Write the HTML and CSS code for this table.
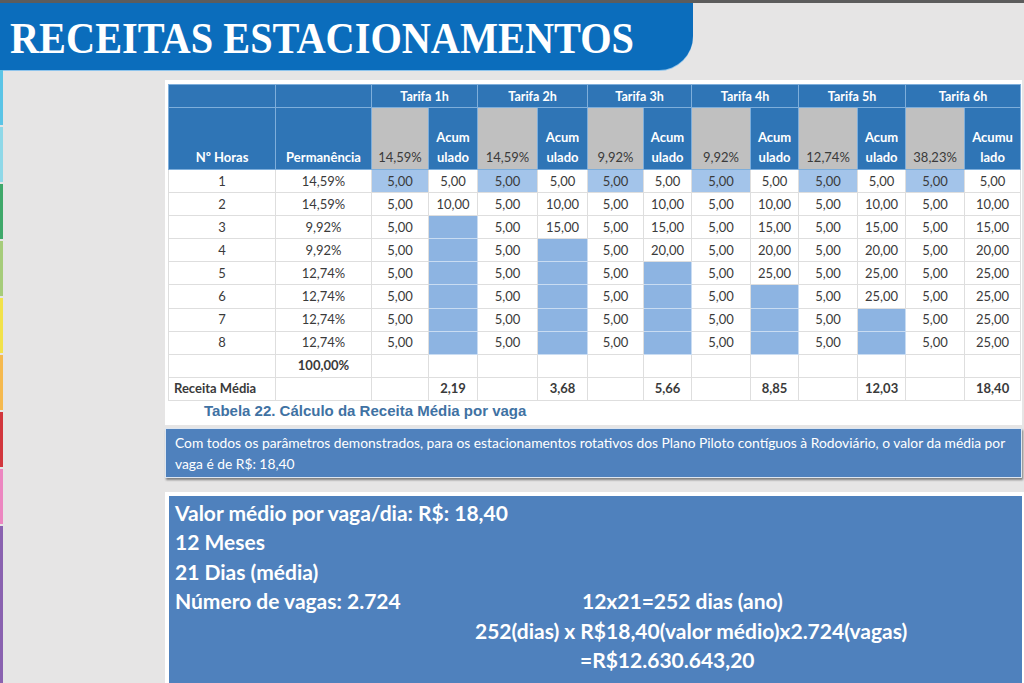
FILE: index.html
```html
<!DOCTYPE html>
<html lang="pt">
<head>
<meta charset="utf-8">
<title>Receitas Estacionamentos</title>
<link rel="stylesheet" href="styles.css">
</head>
<body>
<header class="title-bar">
  <h1 class="title">RECEITAS ESTACIONAMENTOS</h1>
</header>
<div class="main">
  <div class="strip">
    <span class="seg s1"></span><span class="seg s2"></span><span class="seg s3"></span>
    <span class="seg s4"></span><span class="seg s5"></span><span class="seg s6"></span>
    <span class="seg s7"></span><span class="seg s8"></span><span class="seg s9"></span>
  </div>
  <div class="content">
    <section class="panel">
      <table class="grid">
        <colgroup>
          <col class="c-h"><col class="c-p">
          <col class="c-t1"><col class="c-a1">
          <col class="c-t2"><col class="c-a2">
          <col class="c-t3"><col class="c-a3">
          <col class="c-t4"><col class="c-a4">
          <col class="c-t5"><col class="c-a5">
          <col class="c-t6"><col class="c-a6">
        </colgroup>
        <thead>
          <tr class="hr1">
            <th></th><th></th>
            <th colspan="2">Tarifa 1h</th>
            <th colspan="2">Tarifa 2h</th>
            <th colspan="2">Tarifa 3h</th>
            <th colspan="2">Tarifa 4h</th>
            <th colspan="2">Tarifa 5h</th>
            <th colspan="2">Tarifa 6h</th>
          </tr>
          <tr class="hr2">
            <th>Nº Horas</th><th>Permanência</th>
            <th class="gray">14,59%</th><th>Acum<br>ulado</th>
            <th class="gray">14,59%</th><th>Acum<br>ulado</th>
            <th class="gray">9,92%</th><th>Acum<br>ulado</th>
            <th class="gray">9,92%</th><th>Acum<br>ulado</th>
            <th class="gray">12,74%</th><th>Acum<br>ulado</th>
            <th class="gray">38,23%</th><th>Acumu<br>lado</th>
          </tr>
        </thead>
        <tbody>
          <tr><td>1</td><td>14,59%</td>
            <td class="lb">5,00</td><td>5,00</td><td class="lb">5,00</td><td>5,00</td><td class="lb">5,00</td><td>5,00</td>
            <td class="lb">5,00</td><td>5,00</td><td class="lb">5,00</td><td>5,00</td><td class="lb">5,00</td><td>5,00</td></tr>
          <tr><td>2</td><td>14,59%</td>
            <td>5,00</td><td>10,00</td><td>5,00</td><td>10,00</td><td>5,00</td><td>10,00</td>
            <td>5,00</td><td>10,00</td><td>5,00</td><td>10,00</td><td>5,00</td><td>10,00</td></tr>
          <tr><td>3</td><td>9,92%</td>
            <td>5,00</td><td class="e"></td><td>5,00</td><td>15,00</td><td>5,00</td><td>15,00</td>
            <td>5,00</td><td>15,00</td><td>5,00</td><td>15,00</td><td>5,00</td><td>15,00</td></tr>
          <tr><td>4</td><td>9,92%</td>
            <td>5,00</td><td class="e"></td><td>5,00</td><td class="e"></td><td>5,00</td><td>20,00</td>
            <td>5,00</td><td>20,00</td><td>5,00</td><td>20,00</td><td>5,00</td><td>20,00</td></tr>
          <tr><td>5</td><td>12,74%</td>
            <td>5,00</td><td class="e"></td><td>5,00</td><td class="e"></td><td>5,00</td><td class="e"></td>
            <td>5,00</td><td>25,00</td><td>5,00</td><td>25,00</td><td>5,00</td><td>25,00</td></tr>
          <tr><td>6</td><td>12,74%</td>
            <td>5,00</td><td class="e"></td><td>5,00</td><td class="e"></td><td>5,00</td><td class="e"></td>
            <td>5,00</td><td class="e"></td><td>5,00</td><td>25,00</td><td>5,00</td><td>25,00</td></tr>
          <tr><td>7</td><td>12,74%</td>
            <td>5,00</td><td class="e"></td><td>5,00</td><td class="e"></td><td>5,00</td><td class="e"></td>
            <td>5,00</td><td class="e"></td><td>5,00</td><td class="e"></td><td>5,00</td><td>25,00</td></tr>
          <tr><td>8</td><td>12,74%</td>
            <td>5,00</td><td class="e"></td><td>5,00</td><td class="e"></td><td>5,00</td><td class="e"></td>
            <td>5,00</td><td class="e"></td><td>5,00</td><td class="e"></td><td>5,00</td><td>25,00</td></tr>
          <tr><td></td><td class="b">100,00%</td>
            <td></td><td></td><td></td><td></td><td></td><td></td>
            <td></td><td></td><td></td><td></td><td></td><td></td></tr>
          <tr class="total"><td class="label">Receita Média</td><td></td>
            <td></td><td>2,19</td><td></td><td>3,68</td><td></td><td>5,66</td>
            <td></td><td>8,85</td><td></td><td>12,03</td><td></td><td>18,40</td></tr>
        </tbody>
      </table>
      <p class="caption">Tabela 22. Cálculo da Receita Média por vaga</p>
    </section>
    <div class="note">
      Com todos os parâmetros demonstrados, para os estacionamentos rotativos dos Plano Piloto contíguos à Rodoviário, o valor da média por vaga é de R$: 18,40
    </div>
    <div class="calc">
      <div class="line">Valor médio por vaga/dia: R$: 18,40</div>
      <div class="line">12 Meses</div>
      <div class="line">21 Dias (média)</div>
      <div class="line split"><span class="left">Número de vagas: 2.724</span><span class="right">12x21=252 dias (ano)</span></div>
      <div class="line in2">252(dias) x R$18,40(valor médio)x2.724(vagas)</div>
      <div class="line in3">=R$12.630.643,20</div>
    </div>
  </div>
</div>
</body>
</html>
```

FILE: styles.css
```css
* { box-sizing: border-box; }

html, body {
  margin: 0;
  padding: 0;
  height: 683px;
  overflow: hidden;
}

body {
  background: #e6e5e5;
  border-top: 3px solid #5c5c5c;
  font-family: Lato, "Open Sans", sans-serif;
}

.title-bar {
  width: 693px;
  height: 67px;
  background: #0b6dbc;
  border-bottom-right-radius: 34px;
  box-shadow: 0 1px 0 #8fc4ec;
  display: flex;
  align-items: center;
  padding-left: 10px;
}

.title {
  margin: 0;
  font-family: "Liberation Serif", "Times New Roman", serif;
  font-weight: bold;
  font-size: 45px;
  color: #ffffff;
  white-space: nowrap;
  transform: scaleX(0.896);
  transform-origin: left center;
  line-height: 1;
  padding-top: 4px;
}

.main {
  display: flex;
  align-items: flex-start;
}

.strip {
  width: 3px;
  display: flex;
  flex-direction: column;
  gap: 2px;
}

.seg { display: block; width: 3px; height: 55px; }
.s1 { background: #5bc4e6; }
.s2 { background: #8fd8e8; }
.s3 { background: #3fa86a; }
.s4 { background: #a6cc7a; }
.s5 { background: #f2e24a; }
.s6 { background: #f5b94e; }
.s7 { background: #d2363d; }
.s8 { background: #ec86c0; }
.s9 { background: #8a62b0; height: 160px; }

.content {
  margin-left: 162px;
  width: 857px;
  display: flex;
  flex-direction: column;
}

.panel {
  background: #ffffff;
  margin-top: 10px;
  padding: 4px 0 6px 3px;
}

.grid {
  border-collapse: collapse;
  table-layout: fixed;
  width: 852px;
  font-size: 13px;
  color: #3a3a3a;
}

.c-h { width: 107px; }
.c-p { width: 96px; }
.c-t1 { width: 57px; }
.c-a1 { width: 49px; }
.c-t2 { width: 60px; }
.c-a2 { width: 50px; }
.c-t3 { width: 56px; }
.c-a3 { width: 48px; }
.c-t4 { width: 59px; }
.c-a4 { width: 48px; }
.c-t5 { width: 59px; }
.c-a5 { width: 48px; }
.c-t6 { width: 59px; }
.c-a6 { width: 56px; }

.grid th {
  background: #2f75b6;
  color: #ffffff;
  font-weight: bold;
  font-size: 12.5px;
  border: 1px solid #7eaedb;
  padding: 0;
  text-align: center;
}

.hr1 th { height: 23px; vertical-align: middle; }

.hr2 th {
  height: 62px;
  vertical-align: bottom;
  line-height: 20px;
  padding-bottom: 2px;
  font-size: 13px;
}

.hr2 th.gray {
  background: #c0c0c0;
  color: #3a3a3a;
  font-weight: normal;
}

.grid td {
  height: 23.1px;
  padding: 0;
  text-align: center;
  border: 1px solid #dedede;
  background: #ffffff;
  line-height: 21px;
}

.grid td.lb { background: #a3c4ea; }
.grid td.e { background: #8db4e2; border-color: #c9dcf2; }
.grid td.b { font-weight: bold; }

.total td { font-weight: bold; }
.total td.label { text-align: left; padding-left: 5px; }

.caption {
  margin: 0;
  padding: 1px 0 0 36px;
  font-family: "Liberation Sans", Arial, sans-serif;
  font-weight: bold;
  font-size: 15px;
  color: #3f72a3;
  line-height: 17px;
}

.note {
  margin-top: 3px;
  background: #4f81bd;
  color: #ffffff;
  font-size: 13.8px;
  line-height: 21px;
  padding: 3px 8px 3px 9px;
  border: 1px solid #dde6f1;
  box-shadow: 1px 2px 2px rgba(0, 0, 0, 0.45);
  width: 857px;
}

.calc {
  margin-top: 14px;
  background: #4f81bd;
  border: 4px solid #ffffff;
  border-right-width: 2px;
  color: #ffffff;
  font-weight: bold;
  font-size: 21px;
  padding: 2px 0 10px 6px;
  width: 859px;
}

.calc .line {
  line-height: 29.5px;
  white-space: nowrap;
}

.split { display: flex; }
.split .left { width: 407px; }
.in2 { padding-left: 300px; }
.in3 { padding-left: 405px; }
```
